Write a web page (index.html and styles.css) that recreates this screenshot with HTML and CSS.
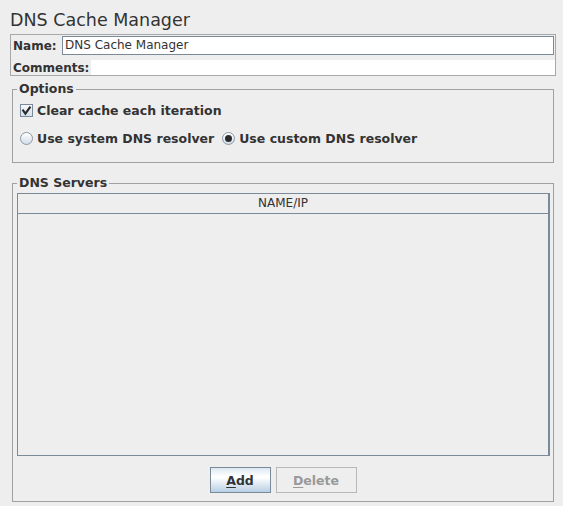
FILE: index.html
```html
<!DOCTYPE html>
<html>
<head>
<meta charset="utf-8">
<link rel="stylesheet" href="styles.css">
</head>
<body>
<div class="app">
  <div class="title">DNS Cache Manager</div>
  <div class="name-panel">
    <div class="name-row">
      <span class="lbl">Name:</span>
      <div class="field">DNS Cache Manager</div>
    </div>
    <div class="comments-row">
      <span class="lbl">Comments:</span>
      <div class="comments-area"></div>
    </div>
  </div>

  <fieldset class="group options">
    <legend class="legend">Options</legend>
    <div class="options-body">
      <div class="opt-row">
        <span class="checkbox">
          <svg width="13" height="13" viewBox="0 0 13 13"><path d="M3.2 6.6 L5.4 9.6 L9.8 3.6" fill="none" stroke="#2b2b2b" stroke-width="2.2" stroke-linecap="square"/></svg>
        </span>
        <span class="opt-text">Clear cache each iteration</span>
      </div>
      <div class="opt-row radios">
        <span class="radio-item">
          <span class="radio"></span>
          <span class="opt-text">Use system DNS resolver</span>
        </span>
        <span class="radio-item">
          <span class="radio selected"><span class="dot"></span></span>
          <span class="opt-text">Use custom DNS resolver</span>
        </span>
      </div>
    </div>
  </fieldset>

  <fieldset class="group servers">
    <legend class="legend">DNS Servers</legend>
    <div class="table">
      <div class="thead">NAME/IP</div>
      <div class="tbody"></div>
    </div>
    <div class="buttons">
      <button class="btn primary"><u>A</u>dd</button>
      <button class="btn disabled"><u>D</u>elete</button>
    </div>
  </fieldset>
</div>
</body>
</html>
```

FILE: styles.css
```css
html, body {
  margin: 0;
  padding: 0;
  background: #eeeeee;
}
body {
  width: 563px;
  height: 506px;
  overflow: hidden;
  font-family: "DejaVu Sans", "Liberation Sans", sans-serif;
  color: #333333;
}
.app {
  display: flex;
  flex-direction: column;
}
.title {
  padding: 10px 0 0 10px;
  height: 20px;
  line-height: 20px;
  font-size: 17.5px;
  color: #333333;
}
.name-panel {
  margin: 4px 0 0 10px;
  width: 546px;
  height: 42px;
  box-sizing: border-box;
  border: 1px solid #a8a8a8;
  display: flex;
  flex-direction: column;
}
.lbl {
  font-weight: bold;
  font-size: 12px;
  padding-left: 2px;
  color: #333333;
}
.name-row {
  display: flex;
  align-items: center;
  margin-top: 1px;
  height: 19px;
}
.name-row .lbl {
  width: 49px;
}
.field {
  flex: 1;
  margin-right: 1px;
  height: 19px;
  box-sizing: border-box;
  border: 1px solid #7a8a99;
  background: #ffffff;
  font-size: 12px;
  line-height: 17px;
  padding-left: 2px;
  color: #333333;
}
.comments-row {
  display: flex;
  align-items: center;
  margin-top: 5px;
  height: 15px;
}
.comments-row .lbl {
  width: 78px;
}
.comments-area {
  flex: 1;
  height: 15px;
  background: #ffffff;
}

.group {
  margin: 6px 0 0 12px;
  width: 542px;
  box-sizing: border-box;
  border: 1px solid #a0a0a0;
  padding: 0;
  min-width: 0;
}
.legend {
  margin-left: 4px;
  padding: 0 2px;
  font-weight: bold;
  font-size: 12.5px;
  line-height: 14px;
  color: #333333;
}
.options-body {
  padding: 8px 0 17px 7px;
  display: flex;
  flex-direction: column;
}
.opt-row {
  display: flex;
  align-items: center;
  height: 13px;
}
.opt-row.radios {
  margin-top: 15px;
  gap: 8px;
}
.radio-item {
  display: flex;
  align-items: center;
}
.opt-text {
  font-weight: bold;
  font-size: 12.5px;
  line-height: 13px;
  margin-left: 4px;
  color: #333333;
}
.checkbox {
  width: 13px;
  height: 13px;
  box-sizing: border-box;
  border: 1px solid #7a8a99;
  background: linear-gradient(#f6f9fc, #d6e1ec);
  position: relative;
  display: block;
}
.checkbox svg {
  position: absolute;
  left: -1px;
  top: -1px;
}
.radio {
  width: 13px;
  height: 13px;
  box-sizing: border-box;
  border: 1px solid #8a99a8;
  border-radius: 50%;
  background: linear-gradient(#ffffff, #d2dde8);
  display: flex;
  align-items: center;
  justify-content: center;
}
.radio .dot {
  width: 7px;
  height: 7px;
  border-radius: 50%;
  background: #2b2b2b;
}

.servers {
  margin-top: 13px;
  height: 326px;
  display: flex;
  flex-direction: column;
}
.table {
  margin: 3px 3px 0 4px;
  height: 263px;
  box-sizing: border-box;
  border: 1px solid #7a8a99;
  border-right-width: 2px;
  display: flex;
  flex-direction: column;
}
.thead {
  height: 20px;
  box-sizing: border-box;
  border-bottom: 1px solid #7a8a99;
  text-align: center;
  font-size: 12px;
  line-height: 19px;
  color: #333333;
}
.tbody {
  flex: 1;
}
.buttons {
  display: flex;
  justify-content: center;
  gap: 5px;
  margin-top: 11px;
}
.btn {
  height: 26px;
  box-sizing: border-box;
  font-family: "DejaVu Sans", "Liberation Sans", sans-serif;
  font-weight: bold;
  font-size: 12.5px;
  padding: 0;
  margin: 0;
  line-height: 25px;
}
.btn u {
  text-decoration-thickness: 1px;
  text-underline-offset: 2px;
}
.btn.primary {
  width: 61px;
  border: 1px solid #7a8a99;
  background: linear-gradient(#dde8f3 0%, #ffffff 35%, #ffffff 40%, #b8cfe5 100%);
  color: #333333;
}
.btn.disabled {
  width: 81px;
  border: 1px solid #b8b8b8;
  background: #eeeeee;
  color: #999999;
}
```
